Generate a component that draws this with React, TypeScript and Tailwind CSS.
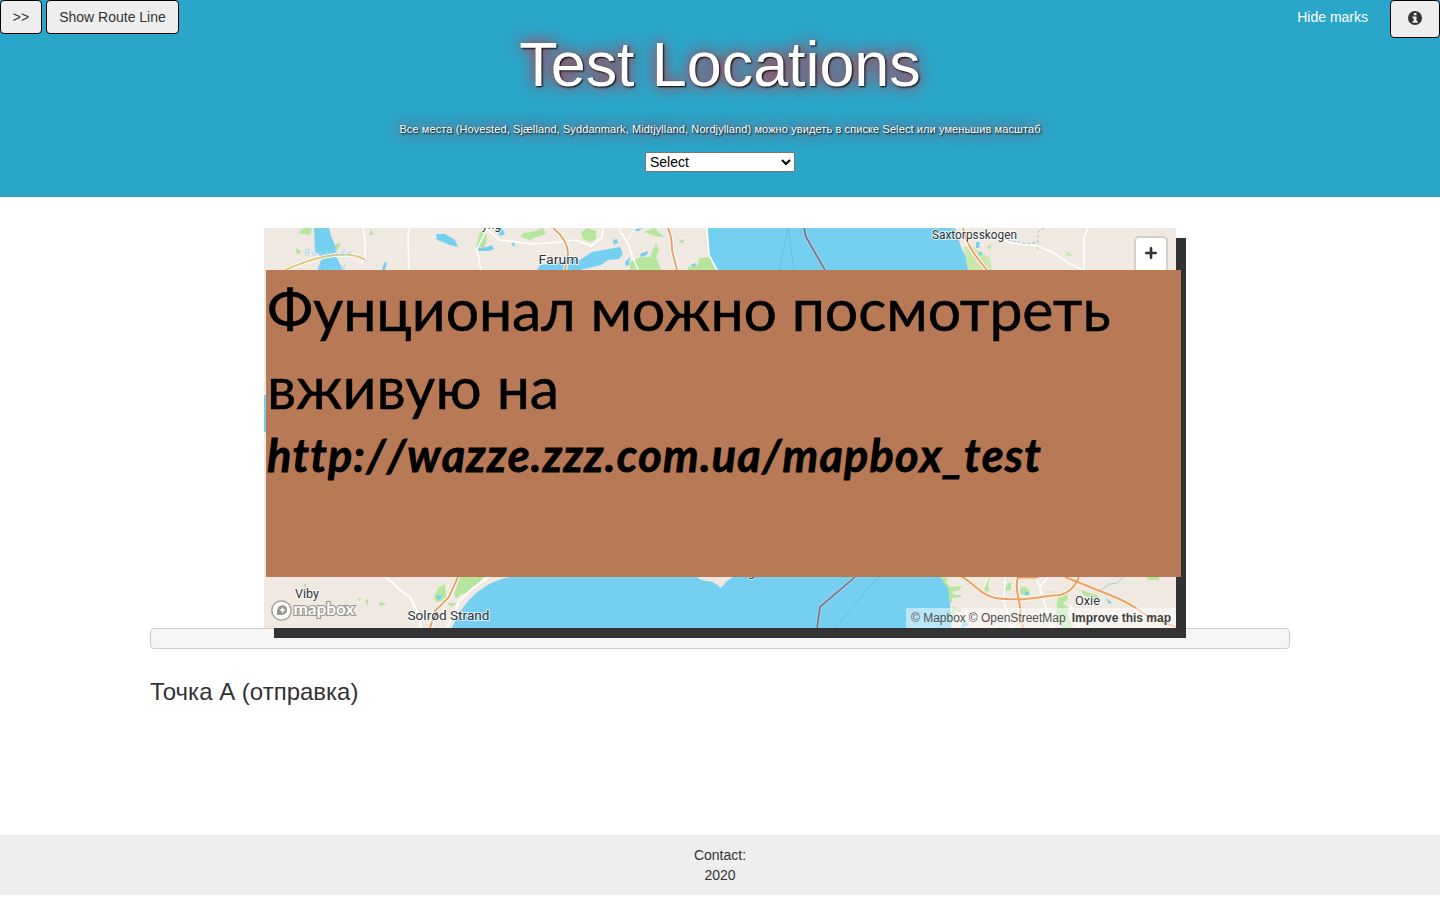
import React from "react";

const WATER = "#75cff0";
const GREEN = "#b6e59e";
const ROAD = "#e7a26b";

function MapCanvas() {
  return (
    <svg className="block h-full w-full" viewBox="264 228 912 400" fontFamily="Roboto, sans-serif">
      <rect x="264" y="228" width="912" height="400" fill="#efe9e1" />

      {/* north-west */}
      <g fill={GREEN}>
        <path d="M304 228L312 228L310 235L298 233Z" />
        <path d="M296 248L301 251L298 255L296 252Z" />
        <path d="M371 229L374 235L369 235Z" />
        <path d="M338 243L341 244L336 251L334 246Z" />
        <path d="M480 232L486 230L487 240L484 247L476 247L478 240Z" />
        <path d="M523 233L536 231L543 228L546 234L536 237L530 240L521 237Z" />
        <path d="M581 233L587 228L596 231L596 239L590 242L583 239Z" />
        <path d="M644 232L654 228L661 234L664 237L655 236Z" />
        <path d="M630 262L641 257L650 257L656 243L659 250L656 257L661 270L630 270Z" />
        <path d="M679 241L685 239L683 243L680 243Z" />
        <path d="M688 267L698 265L699 258L710 257L716 270L688 270Z" />
      </g>
      <g fill={WATER}>
        <path d="M314 228L329 228L331 236L335 245L336 256L343 270L318 270L322 257L315 251Z" />
        <path d="M436 234L445 234L455 240L458 247L450 245L437 240Z" />
        <path d="M477 248L487 247L492 245L494 249L489 251L478 251Z" />
        <path d="M495 228L502 228L505 234L500 236Z" />
        <path d="M511 244L515 242L514 247Z" />
        <path d="M384 263L387 262L385 270L382 270Z" />
        <path d="M537 270L540 265L562 262L572 258L580 260L592 252L609 249L620 247L623 254L619 259L608 260L601 265L580 270Z" />
        <path d="M625 262L630 257L629 265L626 266Z" />
        <path d="M636 229L642 228L639 231L635 231Z" />
        <path d="M613 240L617 239L618 243L614 245Z" />
        <path d="M640 254L648 251L647 255L641 257Z" />
        <path d="M690 265L696 263L695 267Z" />
        <path d="M264 395H266V432H264Z" />
      </g>
      <g fill="none" stroke="#fff" strokeWidth="1.6">
        <path d="M363 228L365 240L365 258L361 263" />
        <path d="M410 228L408 235L409 270" />
        <path d="M481 270L477 249L487 229L499 240L535 244L560 242L576 240L591 246L602 237L603 228" />
        <path d="M619 228L627 242L638 270" />
        <path d="M635 228L627 242" strokeWidth="1" />
      </g>
      <path d="M285 270Q315 257 335 255T365 260" fill="none" stroke="#fff" strokeWidth="4" />
      <path d="M285 270Q315 257 335 255T365 260" fill="none" stroke="#dfc67c" strokeWidth="2" />
      <g fill="none" stroke="#fff" strokeWidth="4">
        <path d="M553 228Q568 240 568 254L565 270" />
        <path d="M668 228Q672 237 672 250L677 270" />
      </g>
      <g fill="none" stroke={ROAD} strokeWidth="2">
        <path d="M553 228Q568 240 568 254L565 270" />
        <path d="M668 228Q672 237 672 250L677 270" />
      </g>
      <g fill="#9ddcf3" fontSize="9" fontStyle="italic" letterSpacing="2">
        <text x="304" y="256">Roskilde</text>
        <text x="317" y="271">Fjord</text>
      </g>

      {/* the strait */}
      <path d="M707 228H955L961 247L966 257L968 270V577H480V270H717L709 255Z" fill={WATER} />
      <path d="M707 228L709 255L717 270" fill="none" stroke="#fff" strokeWidth="1.6" />
      <path d="M510 577C494 580 468 590 452 628H951L952 621L950 605L949 587L940 577Z" fill={WATER} />
      <path d="M788 228L779 270M788 228L794 270M878 577L835 628" stroke="#5cb9df" strokeWidth="0.7" fill="none" />
      <g fill="none">
        <path d="M804 228L806 237L825 270M855 577L820 607L817 628" stroke="#a0cfe5" strokeWidth="4" />
        <path d="M804 228L806 237L825 270M855 577L820 607L817 628" stroke="#70758a" strokeWidth="1.6" />
      </g>
      <path d="M697 577H733L727 581L723 586L720 588L718 585L715 584L713 582L706 581L699 579Z" fill="#efe9e1" />

      {/* north-east */}
      <path d="M964 247L972 246L980 252L990 258L992 270H968Z" fill="#cbe5ae" />
      <path d="M987 246L992 245L989 250ZM1036 247L1040 247L1037 250ZM1067 252L1073 256L1067 255Z" fill={GREEN} />
      <path d="M976 242H980L979 248H976ZM979 252H982V255H979Z" fill={WATER} />
      <path d="M963 228Q967 248 987 270" fill="none" stroke="#fff" strokeWidth="4" />
      <path d="M963 228Q967 248 987 270" fill="none" stroke={ROAD} strokeWidth="2" />
      <path d="M994 237L1012 243L1037 246L1052 252L1067 262L1082 270M1088 228L1084 238L1084 270" fill="none" stroke="#fff" strokeWidth="1.6" />
      <path d="M1044 228L1038 232L1038 242L1027 244L1008 240" fill="none" stroke="#91c8de" strokeDasharray="3 2" />

      {/* south-west */}
      <g fill={GREEN}>
        <path d="M460 577L484 577L470 592L461 594L456 599L454 594Z" />
        <path d="M439 587L445 584L446 597L442 601L436 602L434 597Z" />
        <path d="M357 599L361 598L360 601ZM365 600L368 599L368 606ZM379 602L387 604L380 606ZM447 603L457 603L451 607ZM304 584H306V588L303 587Z" />
      </g>
      <path d="M437 595L442 596L440 600L436 598Z" fill={WATER} />
      <path d="M385 577L392 582L400 590L410 597L416 609L419 617L421 628M489 577L473 588L459 601L451 619L447 628" fill="none" stroke="#fff" strokeWidth="2" />
      <path d="M458 577L449 597L435 611L430 628" fill="none" stroke="#fff" strokeWidth="4" />
      <path d="M458 577L449 597L435 611L430 628" fill="none" stroke={ROAD} strokeWidth="2" />

      {/* south-east */}
      <g fill={GREEN}>
        <path d="M940 577L948 578L946 582L950 587L962 586L959 590L952 592L954 595L961 595V597L952 598V603L950 603L948 588Z" />
        <path d="M986 578L990 577L988 585L989 591L984 592Z" />
        <path d="M1007 584L1011 582L1011 590L1005 591Z" />
        <path d="M1021 587L1026 587L1030 592L1028 596L1020 594Z" />
        <path d="M1058 596L1067 592L1068 599L1062 604L1058 601L1068 607L1068 615L1073 628H1062L1056 613Z" />
        <path d="M1081 590L1090 593L1099 596L1094 600L1083 595Z" />
        <path d="M1147 577H1159V580H1148Z" />
        <path d="M952 607L961 609L961 612L955 611L955 618L952 615Z" />
      </g>
      <path d="M1025 592H1029V595H1025ZM1106 598L1112 603L1109 604ZM963 621L970 625L961 628Z" fill={WATER} />
      <path d="M1005 577L1004 602L1012 628M1036 577L1042 595L1052 628M1070 604L1079 628M988 577L984 587M1048 577L1040 587" fill="none" stroke="#fff" strokeWidth="1.5" />
      <path d="M962 577C975 583 981 599 1006 599C1030 601 1045 595 1060 595Q1073 592 1079 577M1018 577Q1015 586 1019 600L1023 628M1065 577L1110 595Q1131 603 1147 616L1176 627" fill="none" stroke="#fff5e9" strokeWidth="4" />
      <path d="M962 577C975 583 981 599 1006 599C1030 601 1045 595 1060 595Q1073 592 1079 577M1018 577Q1015 586 1019 600L1023 628M1065 577L1110 595Q1131 603 1147 616L1176 627M1018 577.5H1038" fill="none" stroke={ROAD} strokeWidth="2" />
      <path d="M1124 577L1117 583L1110 584L1100 590" fill="none" stroke="#abcbd4" />
      <path d="M1046 592H1056" stroke="#9bd57e" strokeDasharray="1 2" />

      <g fill="#30343b" stroke="#fff" strokeWidth="2" strokeOpacity="0.7" paintOrder="stroke">
        <text x="538.5" y="263.5" fontSize="13.5" textLength="40" lengthAdjust="spacingAndGlyphs">Farum</text>
        <text x="932" y="239" fontSize="12" textLength="85" lengthAdjust="spacingAndGlyphs">Saxtorpsskogen</text>
        <text x="482" y="228.5" fontSize="12">yng</text>
        <text x="295" y="598" fontSize="13" textLength="24" lengthAdjust="spacingAndGlyphs">Viby</text>
        <text x="407.5" y="620" fontSize="13" textLength="82" lengthAdjust="spacingAndGlyphs">Solrød Strand</text>
        <text x="1075" y="605" fontSize="13" textLength="25" lengthAdjust="spacingAndGlyphs">Oxie</text>
        <text x="748" y="576" fontSize="12">g</text>
      </g>

      {/* mapbox mark */}
      <circle cx="281.5" cy="610.5" r="9.7" fill="#fff" stroke="#99958f" strokeWidth="1.3" />
      <path d="M277 614.8C276.5 610.5 277.5 605.5 282.5 605.3C287.8 605.5 288.5 611.5 285 614C282.5 615.5 279.5 615 277 614.8Z" fill="#99958f" />
      <path d="M282.5 606.8L283.5 609L285.7 610L283.5 611L282.5 613.2L281.5 611L279.3 610L281.5 609Z" fill="#fff" />
      <text x="293.5" y="614.5" fontFamily="Lato, sans-serif" fontSize="16.5" fontWeight="700" textLength="61" lengthAdjust="spacingAndGlyphs" fill="#fff" stroke="#99958f" strokeWidth="2.2" paintOrder="stroke">mapbox</text>
    </svg>
  );
}

function MapPanel() {
  return (
    <div className="relative mx-auto h-[400px] w-[912px] shadow-[10px_10px_0_#333]">
      <MapCanvas />
      <button className="absolute top-[8px] right-[8px] flex h-[60px] w-[34px] items-start justify-center rounded-[5px] border-2 border-[#d4cfc8] bg-white pt-[9px]">
        <svg width="12" height="12" viewBox="0 0 12 12">
          <path d="M6 1.3V10.7M1.3 6H10.7" stroke="#333" strokeWidth="2.6" strokeLinecap="round" />
        </svg>
      </button>
      <div className="absolute right-0 bottom-0 flex h-[20px] w-[270px] items-center justify-between bg-white/50 pr-[5px] pl-[5px] text-[12px] whitespace-nowrap text-[#404040]">
        <span className="text-[#505050]">© Mapbox</span>
        <span className="-ml-[2px] text-[#505050]">© OpenStreetMap</span>
        <b className="ml-[1px]">Improve this map</b>
      </div>
      <div className="absolute top-[42px] left-[2px] flex h-[307px] w-[915px] flex-col bg-[#b87a56] pl-px font-['Lato','Noto_Sans',sans-serif] whitespace-nowrap text-black [font-variant-ligatures:none]">
        <p className="text-[59px] leading-[78px] tracking-[-0.15px] [-webkit-text-stroke:0.5px_black]">Фунционал можно посмотреть</p>
        <p className="text-[59px] leading-[78px] [-webkit-text-stroke:0.5px_black]">вживую на</p>
        <p className="-mt-px text-[45px] leading-[60px] font-bold tracking-[1.2px] italic [-webkit-text-stroke:0.8px_black] [font-kerning:none]">http://wazze.zzz.com.ua/mapbox_test</p>
      </div>
    </div>
  );
}

function InfoIcon() {
  return (
    <svg width="14" height="14" viewBox="0 0 14 14">
      <circle cx="7" cy="7" r="7" fill="#333" />
      <path d="M5.8 2H8.5V4.3H5.8ZM4.5 5.4H8.5V10H9.7V11.8H4.5V10H5.7V7.2H4.5Z" fill="#eee" />
    </svg>
  );
}

export default function App() {
  return (
    <div className="h-[900px] overflow-hidden bg-white font-['Liberation_Sans',Arial,sans-serif] text-[14px] leading-[20px] text-[#333]">
      <header className="relative flex h-[197px] flex-col items-center bg-[#2ba6cb]">
        <div className="absolute top-0 left-0 flex gap-[4px]">
          <button className="h-[34px] w-[42px] rounded-[4px] border border-black bg-[#eee]">&gt;&gt;</button>
          <button className="h-[34px] w-[133px] rounded-[4px] border border-black bg-[#eee]">Show Route Line</button>
        </div>
        <div className="absolute top-0 right-0 flex">
          <span className="mt-[7px] mr-[22px] text-white">Hide marks</span>
          <button className="flex h-[38px] w-[50px] items-center justify-center rounded-[4px] border border-black bg-[#eee] pb-[2px]">
            <InfoIcon />
          </button>
        </div>
        <h1 className="mt-[30px] text-[63px] leading-[69px] tracking-[-0.1px] text-white [text-shadow:1px_1px_2px_black,0_0_15px_red]">Test Locations</h1>
        <p className="mt-[20px] text-[11px] tracking-[0.1px] text-white [text-shadow:1px_1px_2px_black,0_0_15px_red]">Все места (Hovested, Sjælland, Syddanmark, Midtjylland, Nordjylland) можно увидеть в списке Select или уменьшив масштаб</p>
        <select className="mt-[13px] h-[20px] w-[150px] border border-[#767676] bg-white text-[14px] leading-[18px] text-black">
          <option>Select</option>
        </select>
      </header>

      <main className="pt-[31px]">
        <div className="relative z-10"><MapPanel /></div>
        <div className="mx-auto h-[21px] w-[1140px] rounded-[4px] border border-[#ccc] bg-[#f5f5f5]" />
        <div className="mx-auto mt-[30px] h-[156px] w-[1140px]">
          <h3 className="text-[24px] leading-[26px]">Точка А (отправка)</h3>
        </div>
      </main>

      <footer className="h-[60px] bg-[#eee] pt-[10px] text-center">
        <p>Contact:</p>
        <p>2020</p>
      </footer>
    </div>
  );
}
